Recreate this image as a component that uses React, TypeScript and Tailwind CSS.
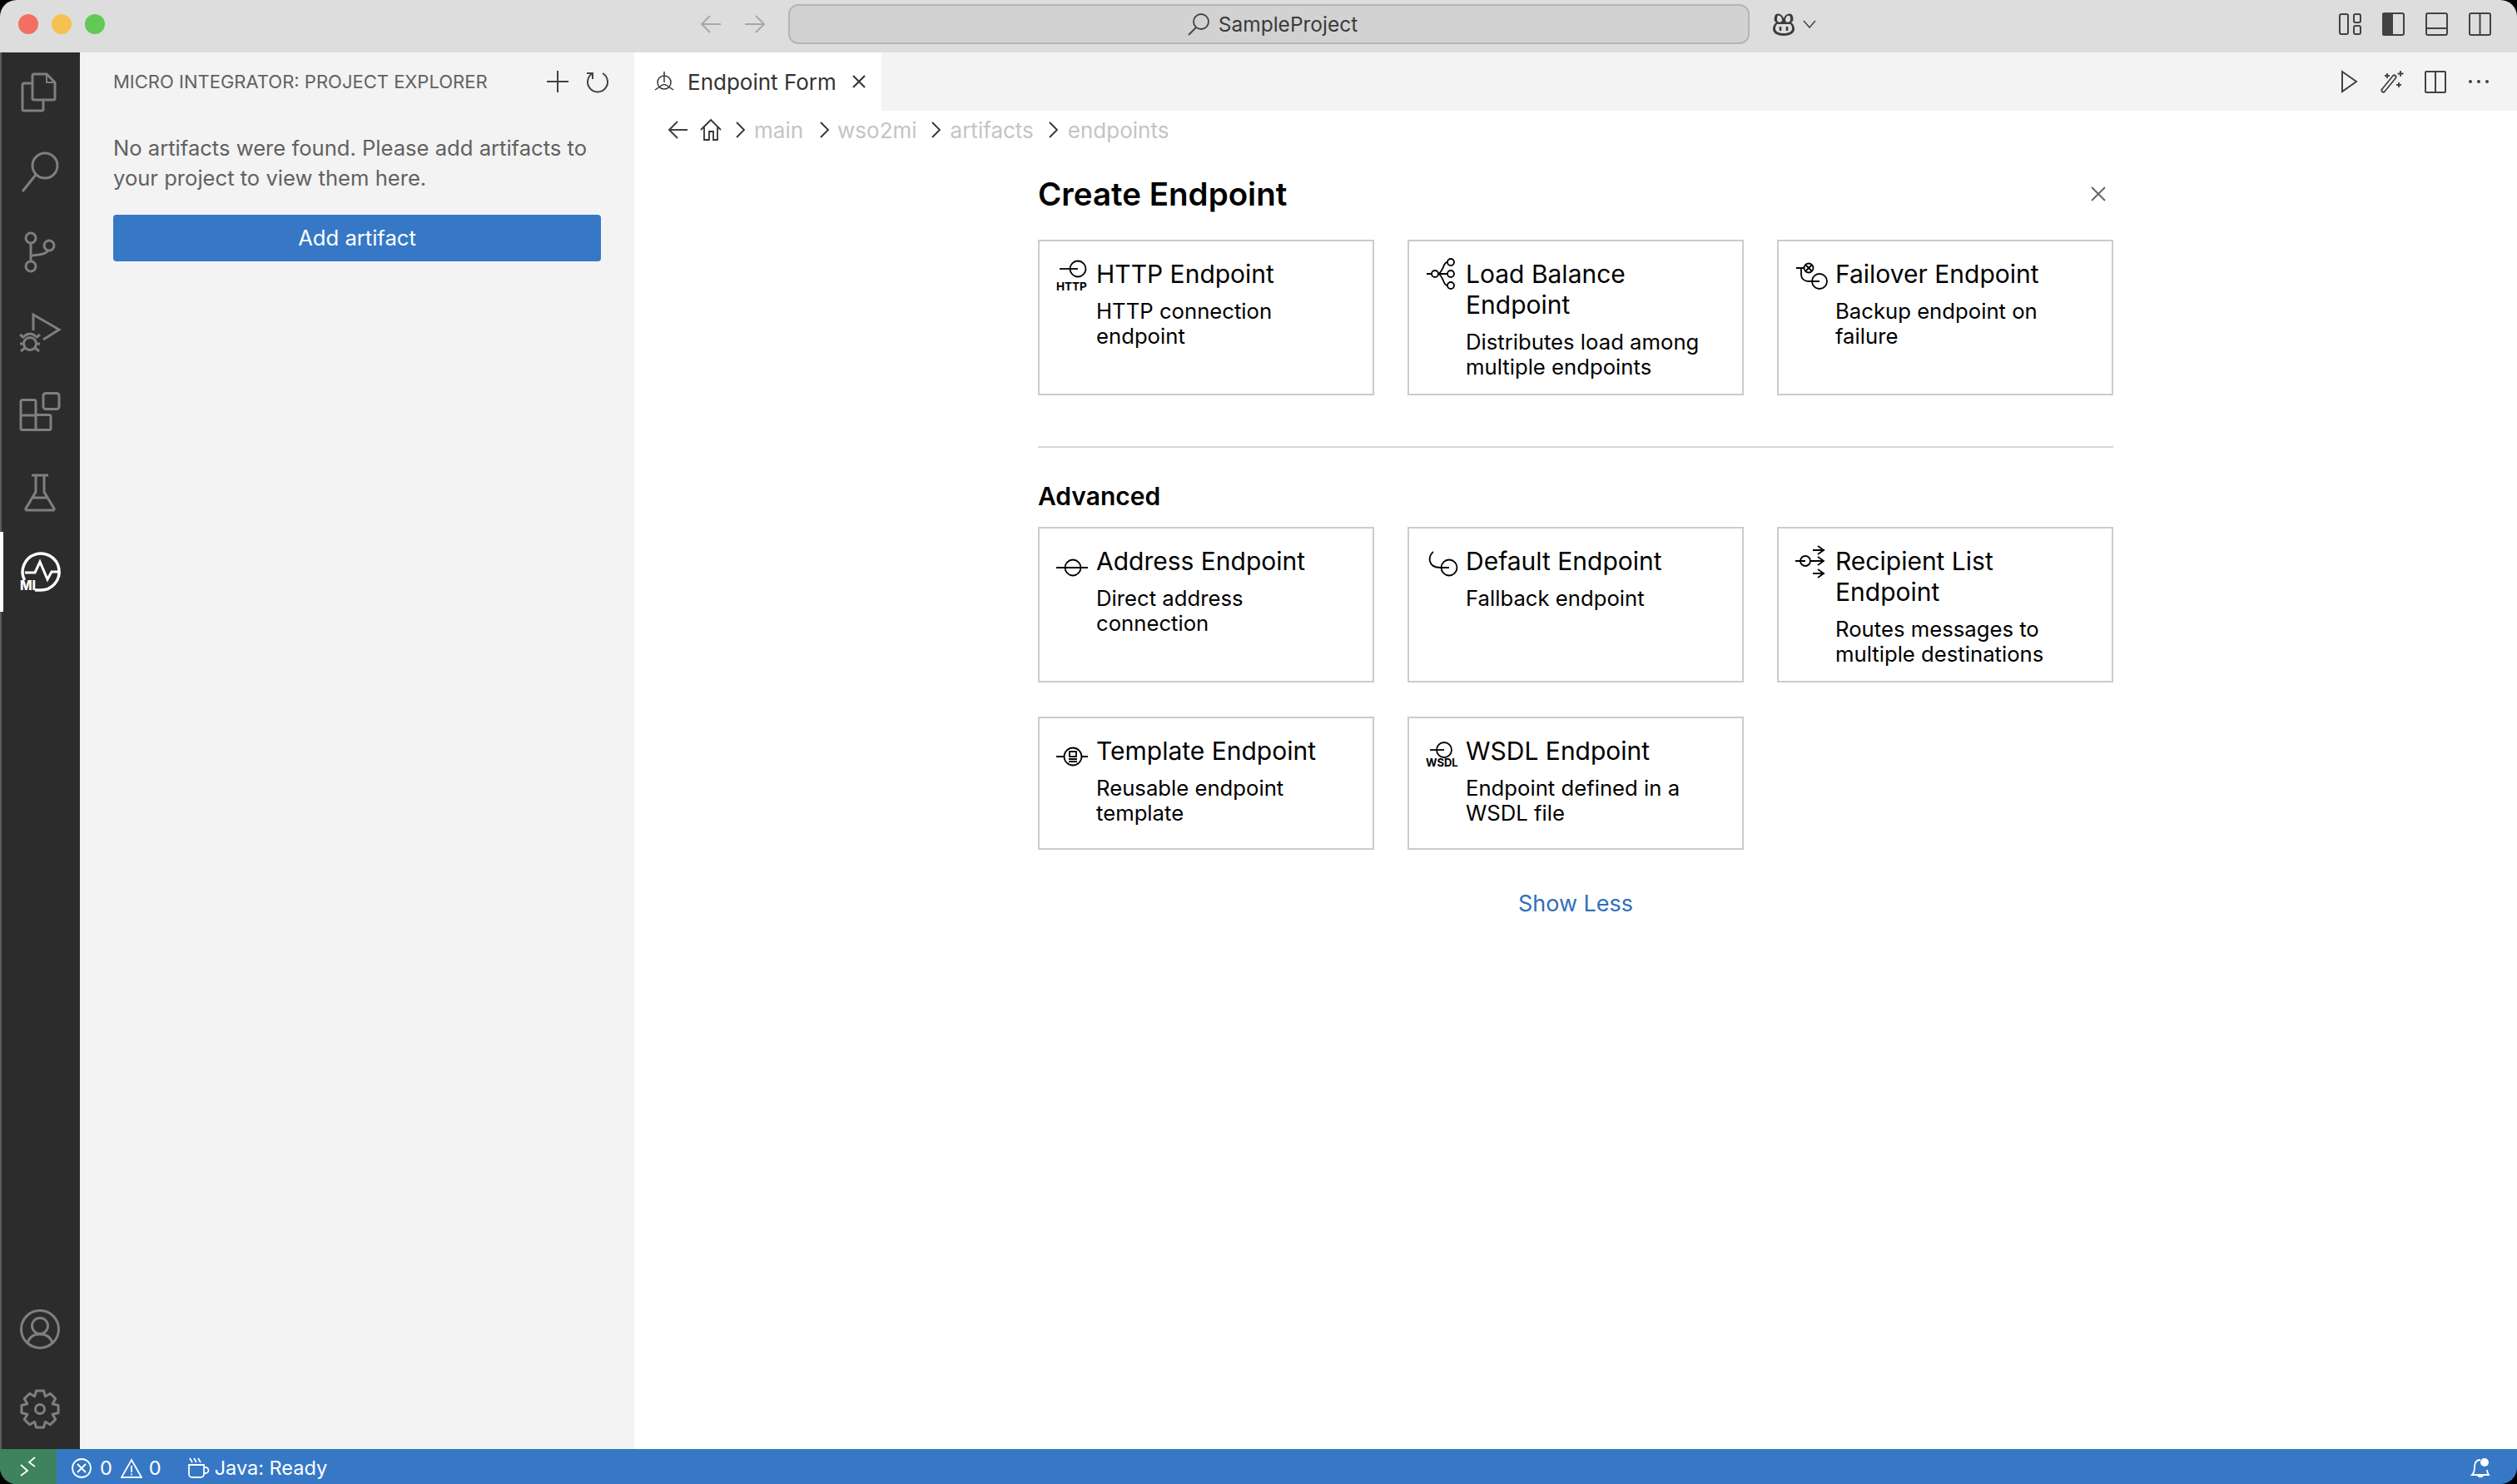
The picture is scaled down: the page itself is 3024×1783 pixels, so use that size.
import type { ReactNode } from "react";

const gearPoints = () => {
  const pts: string[] = [];
  for (let i = 0; i < 8; i++) {
    const a = (i * Math.PI) / 4;
    const list: [number, number][] = [
      [-0.39, 16.5],
      [-0.2, 22.5],
      [0.2, 22.5],
      [0.39, 16.5],
    ];
    list.forEach(([o, r]) => {
      pts.push(`${(24 + r * Math.sin(a + o)).toFixed(1)},${(24 - r * Math.cos(a + o)).toFixed(1)}`);
    });
  }
  return pts.join(" ");
};

const ActivityIcon = ({ children, white }: { children: ReactNode; white?: boolean }) => (
  <svg width="48" height="48" viewBox="0 0 48 48" fill="none" stroke={white ? "#ffffff" : "#7f7f7f"} strokeWidth="3" overflow="visible">
    {children}
  </svg>
);

const ActivityItem = ({ children, active }: { children: ReactNode; active?: boolean }) => (
  <div className={`relative flex h-24 w-full items-center justify-center ${active ? "border-l-4 border-white pr-1" : ""}`}>
    {children}
  </div>
);

const ActivityBar = () => (
  <div className="flex h-full w-24 shrink-0 flex-col justify-between border-l-2 border-[#5c5c5c] bg-[#2c2c2c]">
    <div className="-ml-0.5 flex flex-col">
      <ActivityItem>
        <ActivityIcon>
          <path d="M15 31V4a2 2 0 0 1 2-2h15l10 10v19a2 2 0 0 1-2 2H17a2 2 0 0 1-2-2z" />
          <path d="M32 2v10h10" strokeWidth="2" />
          <path d="M15 13H5a2 2 0 0 0-2 2v29a2 2 0 0 0 2 2h21a2 2 0 0 0 2-2V33" />
        </ActivityIcon>
      </ActivityItem>
      <ActivityItem>
        <ActivityIcon>
          <circle cx="30" cy="16" r="15" />
          <path d="M19 27 3 47" />
        </ActivityIcon>
      </ActivityItem>
      <ActivityItem>
        <ActivityIcon>
          <circle cx="13" cy="7" r="6" />
          <circle cx="35" cy="16" r="6" />
          <circle cx="13" cy="41" r="6" />
          <path d="M13 13v22M13 31c0-4 3-3 10-4 8-1 10-3 11-6" />
        </ActivityIcon>
      </ActivityItem>
      <ActivityItem>
        <ActivityIcon>
          <path d="M16 22V3l31 18-19 12" />
          <circle cx="12" cy="38" r="7.500" />
          <path d="M5 29q7-6 14 0M0 27l5 4M24 27l-5 4M0 38h4M24 38h-4M1 47l5-4M23 47l-5-4" />
        </ActivityIcon>
      </ActivityItem>
      <ActivityItem>
        <ActivityIcon>
          <rect x="28" y="1.5" width="19" height="19" rx="3" />
          <path d="M3 9.5h14a2 2 0 0 1 2 2v16h16a2 2 0 0 1 2 2v14a2 2 0 0 1-2 2H3a2 2 0 0 1-2-2v-32a2 2 0 0 1 2-2zM1 28h18v18" />
        </ActivityIcon>
      </ActivityItem>
      <ActivityItem>
        <ActivityIcon>
          <path d="M14 4h20M19 4v20L7 44a1.500 1.500 0 0 0 1 2h32a1.500 1.500 0 0 0 1-2L29 24V4M14 31h20" />
        </ActivityIcon>
      </ActivityItem>
      <ActivityItem active>
        <ActivityIcon white>
          <path d="M5.500 34A22 22 0 1 1 25 46h-7" strokeWidth="3.500" />
          <path d="M6 25h12l6-13 9 21 5-9h9" strokeWidth="3" />
          <text x="0" y="46" fontSize="15.500" fontWeight="800" fill="#ffffff" stroke="none" fontFamily="Inter, sans-serif">
            MI
          </text>
        </ActivityIcon>
      </ActivityItem>
    </div>
    <div className="-ml-0.5 flex flex-col">
      <ActivityItem>
        <ActivityIcon>
          <circle cx="24" cy="24" r="22.500" />
          <circle cx="24" cy="20" r="9.500" />
          <path d="M9 41c2-8 8-11 15-11s13 3 15 11" />
        </ActivityIcon>
      </ActivityItem>
      <ActivityItem>
        <ActivityIcon>
          <polygon points={gearPoints()} strokeLinejoin="round" />
          <circle cx="24" cy="24" r="5.500" />
        </ActivityIcon>
      </ActivityItem>
    </div>
  </div>
);

const Sidebar = () => (
  <div className="flex h-full w-[666px] shrink-0 flex-col bg-[#f3f3f3] px-10 text-[#616161]">
    <div className="flex h-[70px] items-center justify-between">
      <span className="text-[22px] whitespace-nowrap">MICRO INTEGRATOR: PROJECT EXPLORER</span>
      <div className="mr-[-11px] flex items-center gap-[18px]">
        <svg width="30" height="30" viewBox="0 0 30 30" stroke="#424242" strokeWidth="2" fill="none">
          <path d="M15 2v26M2 15h26" />
        </svg>
        <svg width="30" height="30" viewBox="0 0 30 30" stroke="#424242" strokeWidth="2" fill="none">
          <path d="M21 5a12 12 0 1 1-12 0" />
          <path d="M9 12V5H2" />
        </svg>
      </div>
    </div>
    <p className="mt-[27px] text-[25.6px] leading-[36px]">
      No artifacts were found. Please add artifacts to your project to view them here.
    </p>
    <button className="mt-[26px] h-14 w-[586px] rounded bg-[#3678c6] text-[25.6px] text-white">Add artifact</button>
  </div>
);

const Arrow = ({ dir, color }: { dir: "left" | "right"; color: string }) => (
  <svg width="26" height="24" viewBox="0 0 26 24" fill="none" stroke={color} strokeWidth="2">
    {dir === "left" ? <path d="M25 12H2M12 2 2 12l10 10" /> : <path d="M1 12h23M14 2l10 10-10 10" />}
  </svg>
);

const TitleBar = () => (
  <div className="flex h-[63px] shrink-0 items-center bg-[#dddddd] pb-[5px] pl-[22px]">
    <div className="flex gap-4">
      <div className="h-6 w-6 rounded-full bg-[#f36f63]" />
      <div className="h-6 w-6 rounded-full bg-[#f7c151]" />
      <div className="h-6 w-6 rounded-full bg-[#62c955]" />
    </div>
    <div className="ml-[715px] flex gap-[27px]">
      <Arrow dir="left" color="#a8a8a8" />
      <Arrow dir="right" color="#a8a8a8" />
    </div>
    <div className="ml-[27px] flex h-[48px] w-[1155px] items-center justify-center gap-[10px] rounded-xl border-2 border-[#b5b5b5] bg-[#d2d2d2] pl-2 text-[24.5px] text-[#3b3b3b]">
      <svg width="28" height="28" viewBox="0 0 28 28" fill="none" stroke="#424242" strokeWidth="1.800">
        <circle cx="17" cy="11" r="9" />
        <path d="M11 18 2 27" />
      </svg>
      SampleProject
    </div>
    <svg className="ml-[25px]" width="32" height="30" viewBox="0 0 32 30" fill="none">
      <path d="M16 8C14 2 6 0 5 6c-1 4 0 6 2 7-3 2-4 5-4 8 0 5 6 8 13 8s13-3 13-8c0-3-1-6-4-8 2-1 3-3 2-7-1-6-9-4-11 2z" fill="#3b3b3b" />
      <path d="M9 5c2-1 5 1 5 5s-6 3-6 0 0-4 1-5zM23 5c-2-1-5 1-5 5s6 3 6 0 0-4-1-5z" fill="#dddddd" />
      <path d="M8 15h16c2 2 2 4 2 6 0 3-5 5-10 5s-10-2-10-5c0-2 0-4 2-6z" fill="#dddddd" />
      <path d="M12 18v5M20 18v5" stroke="#3b3b3b" strokeWidth="2.500" />
    </svg>
    <svg className="ml-[7px]" width="16" height="10" viewBox="0 0 16 10" fill="none" stroke="#424242" strokeWidth="1.500">
      <path d="M1 1l7 8 7-8" />
    </svg>
    <div className="ml-[628px] flex gap-[25px]">
      <svg width="27" height="28" viewBox="0 0 27 28" fill="none" stroke="#424242" strokeWidth="2">
        <rect x="1" y="2" width="10" height="24" rx="2" />
        <rect x="18" y="2" width="8" height="10" rx="2" />
        <rect x="18" y="16" width="8" height="10" rx="2" />
      </svg>
      <svg width="27" height="28" viewBox="0 0 27 28" fill="none" stroke="#424242" strokeWidth="2">
        <rect x="1" y="1" width="25" height="26" rx="2" />
        <path d="M1 3a2 2 0 0 1 2-2h9v26H3a2 2 0 0 1-2-2z" fill="#424242" />
      </svg>
      <svg width="27" height="28" viewBox="0 0 27 28" fill="none" stroke="#424242" strokeWidth="2">
        <rect x="1" y="1" width="25" height="26" rx="2" />
        <path d="M1 19h25" />
      </svg>
      <svg width="27" height="28" viewBox="0 0 27 28" fill="none" stroke="#424242" strokeWidth="2">
        <rect x="1" y="1" width="25" height="26" rx="2" />
        <path d="M13.500 1v26" />
      </svg>
    </div>
  </div>
);

const TabRow = () => (
  <div className="flex h-[70px] shrink-0 items-stretch justify-between bg-[#f3f3f3]">
    <div className="flex w-[297px] items-center bg-white pl-6 text-[26px] text-[#333333]">
      <svg className="shrink-0" width="24" height="26" viewBox="0 0 24 26" fill="none" stroke="#333333" strokeWidth="1.500">
        <circle cx="12" cy="14" r="8" />
        <path d="M12 1v13M1 23l6-4M23 23l-6-4M7 19q5-5 10 0" />
      </svg>
      <span className="ml-4 whitespace-nowrap">Endpoint Form</span>
      <svg className="ml-[18px] shrink-0" width="18" height="18" viewBox="0 0 18 18" fill="none" stroke="#333333" strokeWidth="2">
        <path d="M2 2l14 14M16 2 2 16" />
      </svg>
    </div>
    <div className="flex items-center gap-6 pr-8">
      <svg width="28" height="28" viewBox="0 0 28 28" fill="none" stroke="#424242" strokeWidth="2">
        <path d="M6 2l17 12L6 26z" />
      </svg>
      <svg width="28" height="28" viewBox="0 0 28 28" fill="none" stroke="#424242" strokeWidth="2">
        <path d="M2 26c-1-1-1-2 0-3L15 7c1-1 2-1 3 0s1 2 0 3L5 26c-1 1-2 1-3 0z" strokeWidth="1.800" />
        <path d="M24 1v7M20.500 4.500h7M8 4v6M5 7h6M22 15v6M19 18h6" strokeWidth="1.800" />
      </svg>
      <svg width="28" height="28" viewBox="0 0 28 28" fill="none" stroke="#424242" strokeWidth="2">
        <rect x="2" y="2" width="24" height="25" rx="1" />
        <path d="M14 2v25" />
      </svg>
      <svg width="28" height="28" viewBox="0 0 28 28" fill="#424242">
        <circle cx="4" cy="14" r="2" />
        <circle cx="14" cy="14" r="2" />
        <circle cx="24" cy="14" r="2" />
      </svg>
    </div>
  </div>
);

const Chevron = () => (
  <svg width="14" height="22" viewBox="0 0 14 22" fill="none" stroke="#333333" strokeWidth="1.800" className="shrink-0">
    <path d="M3 2l9 9-9 9" />
  </svg>
);

const Breadcrumb = () => (
  <div className="flex h-[46px] items-center pl-[40px] text-[26px] text-[#c4c4c4]">
    <svg width="24" height="24" viewBox="0 0 24 24" fill="none" stroke="#424242" strokeWidth="2">
      <path d="M24 12H2M12 2 2 12l10 10" />
    </svg>
    <svg className="ml-[14px]" width="28" height="28" viewBox="0 0 28 28" fill="none" stroke="#333333" strokeWidth="1.800">
      <path d="M2 14 14 2l12 12M6 11v15h6v-10h5v10h5V11" />
    </svg>
    <span className="ml-[14px]">
      <Chevron />
    </span>
    <span className="ml-[10px]">main</span>
    <span className="ml-[18px]">
      <Chevron />
    </span>
    <span className="ml-[9px]">wso2mi</span>
    <span className="ml-[15px]">
      <Chevron />
    </span>
    <span className="ml-[11px]">artifacts</span>
    <span className="ml-[16px]">
      <Chevron />
    </span>
    <span className="ml-[11px]">endpoints</span>
  </div>
);

const tag = (label: string, x: number, y: number, size: number) => (
  <text x={x} y={y} fontSize={size} fontWeight="700" fill="#000" stroke="none" fontFamily="Inter, sans-serif">
    {label}
  </text>
);

const endpointIcons: Record<string, ReactNode> = {
  http: (
    <>
      <circle cx="26" cy="13" r="9.500" />
      <path d="M4 13h22" />
      {tag("HTTP", 0, 39, 13.500)}
    </>
  ),
  balance: (
    <>
      <circle cx="30" cy="5" r="4" />
      <circle cx="30" cy="19" r="4" />
      <circle cx="30" cy="33" r="4" />
      <circle cx="11" cy="19" r="4" />
      <path d="M1 19h6M15 19h11M15 19c3-1 4-4 6-8 1-3 3-6 5-6M15 19c3 1 4 4 6 8 1 3 3 6 5 6" />
    </>
  ),
  failover: (
    <>
      <path d="M1 12h10M7 12v8c0 5 4 8 9 8h13" />
      <circle cx="16" cy="12" r="5.500" />
      <path d="M12.500 8.500l7 7M19.500 8.500l-7 7" />
      <circle cx="29" cy="28" r="9" />
    </>
  ),
  address: (
    <>
      <circle cx="20" cy="27" r="9.500" />
      <path d="M0 27h38" />
    </>
  ),
  fallback: (
    <>
      <circle cx="28" cy="27" r="9.500" />
      <path d="M9 8C3 12 1 27 18 27h10" />
    </>
  ),
  recipient: (
    <>
      <circle cx="12" cy="19" r="6" />
      <path d="M0 19h12M18 19h15M21 6h14M21 34h14M27 1l7 5-7 5M27 14l7 5-7 5M27 29l7 5-7 5" />
    </>
  ),
  template: (
    <>
      <circle cx="20" cy="26" r="10.500" />
      <path d="M0 26h9M31 26h7M15 29h10M15 32h10" />
      <rect x="16" y="20" width="8" height="6" />
    </>
  ),
  wsdl: (
    <>
      <circle cx="22" cy="18" r="9" />
      <path d="M5 18h17" />
      {tag("WSDL", 0, 38, 13)}
    </>
  ),
};

const EndpointCard = ({ icon, title, desc }: { icon: string; title: string; desc: string }) => (
  <div className="flex min-h-[160px] border-2 border-[#cccccc] bg-white pt-[21px] pr-5 pb-[17px] pl-5 text-black">
    <svg className="mr-2 -mt-px shrink-0" width="40" height="40" viewBox="0 0 40 40" fill="none" stroke="#000" strokeWidth="1.800">
      {endpointIcons[icon]}
    </svg>
    <div className="min-w-0">
      <div className="mb-[11px] text-[30px] leading-[37px]">{title}</div>
      <div className="text-[25.7px] leading-[30px]">{desc}</div>
    </div>
  </div>
);

const basic = [
  { icon: "http", title: "HTTP Endpoint", desc: "HTTP connection endpoint" },
  { icon: "balance", title: "Load Balance Endpoint", desc: "Distributes load among multiple endpoints" },
  { icon: "failover", title: "Failover Endpoint", desc: "Backup endpoint on failure" },
];

const advanced = [
  { icon: "address", title: "Address Endpoint", desc: "Direct address connection" },
  { icon: "fallback", title: "Default Endpoint", desc: "Fallback endpoint" },
  { icon: "recipient", title: "Recipient List Endpoint", desc: "Routes messages to multiple destinations" },
  { icon: "template", title: "Template Endpoint", desc: "Reusable endpoint template" },
  { icon: "wsdl", title: "WSDL Endpoint", desc: "Endpoint defined in a WSDL file" },
];

const EndpointForm = () => (
  <div className="mx-auto w-[1292px] pt-[28px]">
    <div className="mb-[29px] flex h-[52px] items-center justify-between">
      <h1 className="pt-px text-[38.5px] font-semibold text-black">Create Endpoint</h1>
      <svg className="mr-2" width="20" height="20" viewBox="0 0 20 20" fill="none" stroke="#616161" strokeWidth="1.800">
        <path d="M2 2l16 16M18 2 2 18" />
      </svg>
    </div>
    <div className="grid grid-cols-3 gap-10">
      {basic.map((c) => (
        <EndpointCard key={c.icon} {...c} />
      ))}
    </div>
    <div className="mt-[61px] h-0.5 bg-[#d6d6d6]" />
    <h2 className="mt-[38px] mb-[17px] text-[30px] leading-[40px] font-semibold text-black">Advanced</h2>
    <div className="grid grid-cols-3 gap-x-10 gap-y-[41px]">
      {advanced.map((c) => (
        <EndpointCard key={c.icon} {...c} />
      ))}
    </div>
    <div className="mt-[45px] text-center text-[27px] leading-[40px] text-[#2f6fb8]">Show Less</div>
  </div>
);

const StatusBar = () => (
  <div className="flex h-[42px] shrink-0 items-center bg-[#3678c6] text-[23.5px] text-white">
    <div className="flex h-full w-[68px] items-center justify-center bg-[#3f825e]">
      <svg width="20" height="24" viewBox="0 0 20 24" fill="none" stroke="#fff" strokeWidth="1.800">
        <path d="M1 10l8 7-8 6M18 1l-7 6 7 5" />
      </svg>
    </div>
    <div className="flex flex-1 items-center pt-[3px]">
      <svg className="ml-[18px]" width="24" height="24" viewBox="0 0 24 24" fill="none" stroke="#fff" strokeWidth="1.800">
        <circle cx="12" cy="12" r="11" />
        <path d="M7 7l10 10M17 7 7 17" />
      </svg>
      <span className="ml-[10px]">0</span>
      <svg className="ml-[10px]" width="26" height="24" viewBox="0 0 26 24" fill="none" stroke="#fff" strokeWidth="1.800">
        <path d="M13 2 25 23H1z" />
        <path d="M13 9v8M13 18.500v2" />
      </svg>
      <span className="ml-[8px]">0</span>
      <svg className="ml-8" width="26" height="26" viewBox="0 0 26 26" fill="none" stroke="#fff" strokeWidth="1.800">
        <path d="M2 1l3 5M7 1l3 5M12 1l3 5M1 9h18v11a4 4 0 0 1-4 4H5a4 4 0 0 1-4-4zM19 12h2a3.500 3.500 0 0 1 0 7h-2" />
      </svg>
      <span className="ml-[6px]">Java: Ready</span>
      <svg className="mr-[32px] ml-auto" width="24" height="26" viewBox="0 0 24 26" fill="none" stroke="#fff" strokeWidth="1.800">
        <path d="M12 3C6 3 5 8 5 12c0 4-1 7-3 9h20c-1-2-2-3-2-6M9 21c0 3 6 3 6 0z" />
        <circle cx="17" cy="6" r="5" fill="#fff" stroke="none" />
      </svg>
    </div>
  </div>
);

export default function App() {
  return (
    <div className="h-[1783px] w-[3024px] overflow-hidden bg-black font-['Inter',sans-serif]">
      <div className="flex h-full flex-col overflow-hidden rounded-[20px]">
        <TitleBar />
        <div className="flex min-h-0 flex-1">
          <ActivityBar />
          <Sidebar />
          <div className="flex min-w-0 flex-1 flex-col bg-white">
            <TabRow />
            <Breadcrumb />
            <EndpointForm />
          </div>
        </div>
        <StatusBar />
      </div>
    </div>
  );
}
